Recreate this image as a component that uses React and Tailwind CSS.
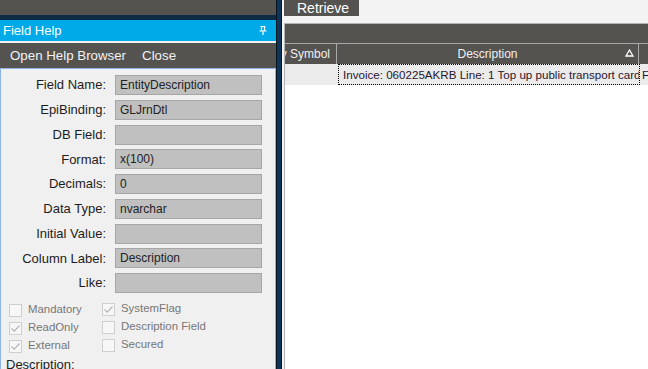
import React from 'react';

const fields = [
  ['Field Name:', 'EntityDescription'],
  ['EpiBinding:', 'GLJrnDtl'],
  ['DB Field:', ''],
  ['Format:', 'x(100)'],
  ['Decimals:', '0'],
  ['Data Type:', 'nvarchar'],
  ['Initial Value:', ''],
  ['Column Label:', 'Description'],
  ['Like:', ''],
];

function Check({ checked, label }) {
  return (
    <div className="flex items-center h-[18px]">
      <div className="w-[13px] h-[13px] border border-[#cfcfcf] bg-[#f7f7f7] flex items-center justify-center">
        {checked && (
          <svg width="11" height="11" viewBox="0 0 11 11">
            <path d="M1.5 5.5 L4.2 8.2 L9.5 2.5" fill="none" stroke="#b5b5b5" strokeWidth="1.2" />
          </svg>
        )}
      </div>
      <span className="ml-[6px] text-[11.4px] text-[#767676]">{label}</span>
    </div>
  );
}

export default function App() {
  return (
    <div
      className="w-[648px] h-[369px] overflow-hidden flex bg-[#f0f0f0]"
      style={{ fontFamily: '"Liberation Sans", Arial, sans-serif' }}
    >
      {/* left panel */}
      <div className="w-[276px] flex flex-col shrink-0">
        <div className="h-[15px] shrink-0 bg-[#555350]" />
        <div className="h-[5px] shrink-0 bg-[#0d2b45]" />
        <div className="h-[21px] shrink-0 bg-[#00aae9] flex items-center justify-between pl-[3px] pr-[9px]">
          <span className="text-[13px] text-white leading-none">Field Help</span>
          <svg width="8" height="9" viewBox="0 0 8 9">
            <path d="M1.5 0.5 H6.5 M2.5 0.5 V5 M5.5 0.5 V5 M0.5 5 H7.5 M4 5 V9" stroke="white" strokeWidth="1.2" fill="none" />
          </svg>
        </div>
        <div className="h-[2px] shrink-0 bg-[#f0f0f0]" />
        <div className="h-[25px] shrink-0 bg-[#555350] flex items-center pl-[10px] gap-[16px] text-[13.3px] text-[#f2f2f2]">
          <span>Open Help Browser</span>
          <span>Close</span>
        </div>
        <div className="flex-1 min-h-0 overflow-hidden bg-[#f0f0f0] border-x border-t border-[#8fb3e6] pt-[6px]">
          <div className="flex flex-col gap-[4.75px]">
            {fields.map(([label, value]) => (
              <div key={label} className="flex items-center h-[20px]">
                <div className="w-[107px] text-right text-[13px] text-[#1c1c1c] pr-[2px]">{label}</div>
                <div className="ml-[7px] w-[147px] h-[20px] bg-[#c0c0c0] border border-[#a6a6a6] flex items-center pl-[4px] text-[12px] text-[#222]">
                  {value}
                </div>
              </div>
            ))}
          </div>
          <div className="flex mt-[8px] pl-[8px]">
            <div className="w-[93px] flex flex-col">
              <Check label="Mandatory" />
              <Check checked label="ReadOnly" />
              <Check checked label="External" />
            </div>
            <div className="flex flex-col -mt-[1px]">
              <Check checked label="SystemFlag" />
              <Check label="Description Field" />
              <Check label="Secured" />
            </div>
          </div>
          <div className="pl-[5px] text-[13px] text-[#1c1c1c]">Description:</div>
        </div>
      </div>

      {/* separator */}
      <div className="w-[6px] shrink-0 flex">
        <div className="w-[1px] bg-[#061420]" />
        <div className="flex-1 bg-[#0e3556]" />
        <div className="w-[1px] bg-[#061420]" />
      </div>

      {/* right area */}
      <div className="flex-1 flex flex-col bg-[#f3f3f4] pl-[2px]">
        <div className="h-[23px] shrink-0 flex items-start">
          <div className="h-[16px] w-[75px] bg-[#555350] flex items-center pl-[13px] text-[14px] text-white leading-none">
            Retrieve
          </div>
        </div>
        <div className="flex-1 flex flex-col bg-white border-l border-t border-[#b4b4b4]">
          <div className="h-[19px] shrink-0 bg-[#555350]" />
          <div className="h-[21px] shrink-0 bg-[#555350] border-t border-[#a8a8a8] flex text-[12px] text-[#f0f0f0]">
            <div className="w-[52px] flex items-center justify-end pr-[6px] border-r border-[#a8a8a8] whitespace-nowrap overflow-hidden">
              y Symbol
            </div>
            <div className="w-[302px] relative flex items-center justify-center border-r border-[#a8a8a8]">
              Description
              <svg className="absolute right-[4px] top-[5px]" width="9" height="8" viewBox="0 0 9 8">
                <path d="M4.5 1 L8 7 H1 Z" fill="none" stroke="white" strokeWidth="1.3" />
              </svg>
            </div>
            <div className="flex-1" />
          </div>
          <div className="h-[21px] shrink-0 flex text-[11.6px] text-[#2a1630] bg-[#ebebeb]">
            <div className="w-[53px] bg-[#ebebeb]" />
            <div className="w-[302px] border border-dotted border-black flex items-center pl-[4px] whitespace-nowrap overflow-hidden">
              Invoice: 060225AKRB Line: 1 Top up public transport card
            </div>
            <div className="flex-1 flex items-center pl-[2px] overflow-hidden">F</div>
          </div>
        </div>
      </div>
    </div>
  );
}
